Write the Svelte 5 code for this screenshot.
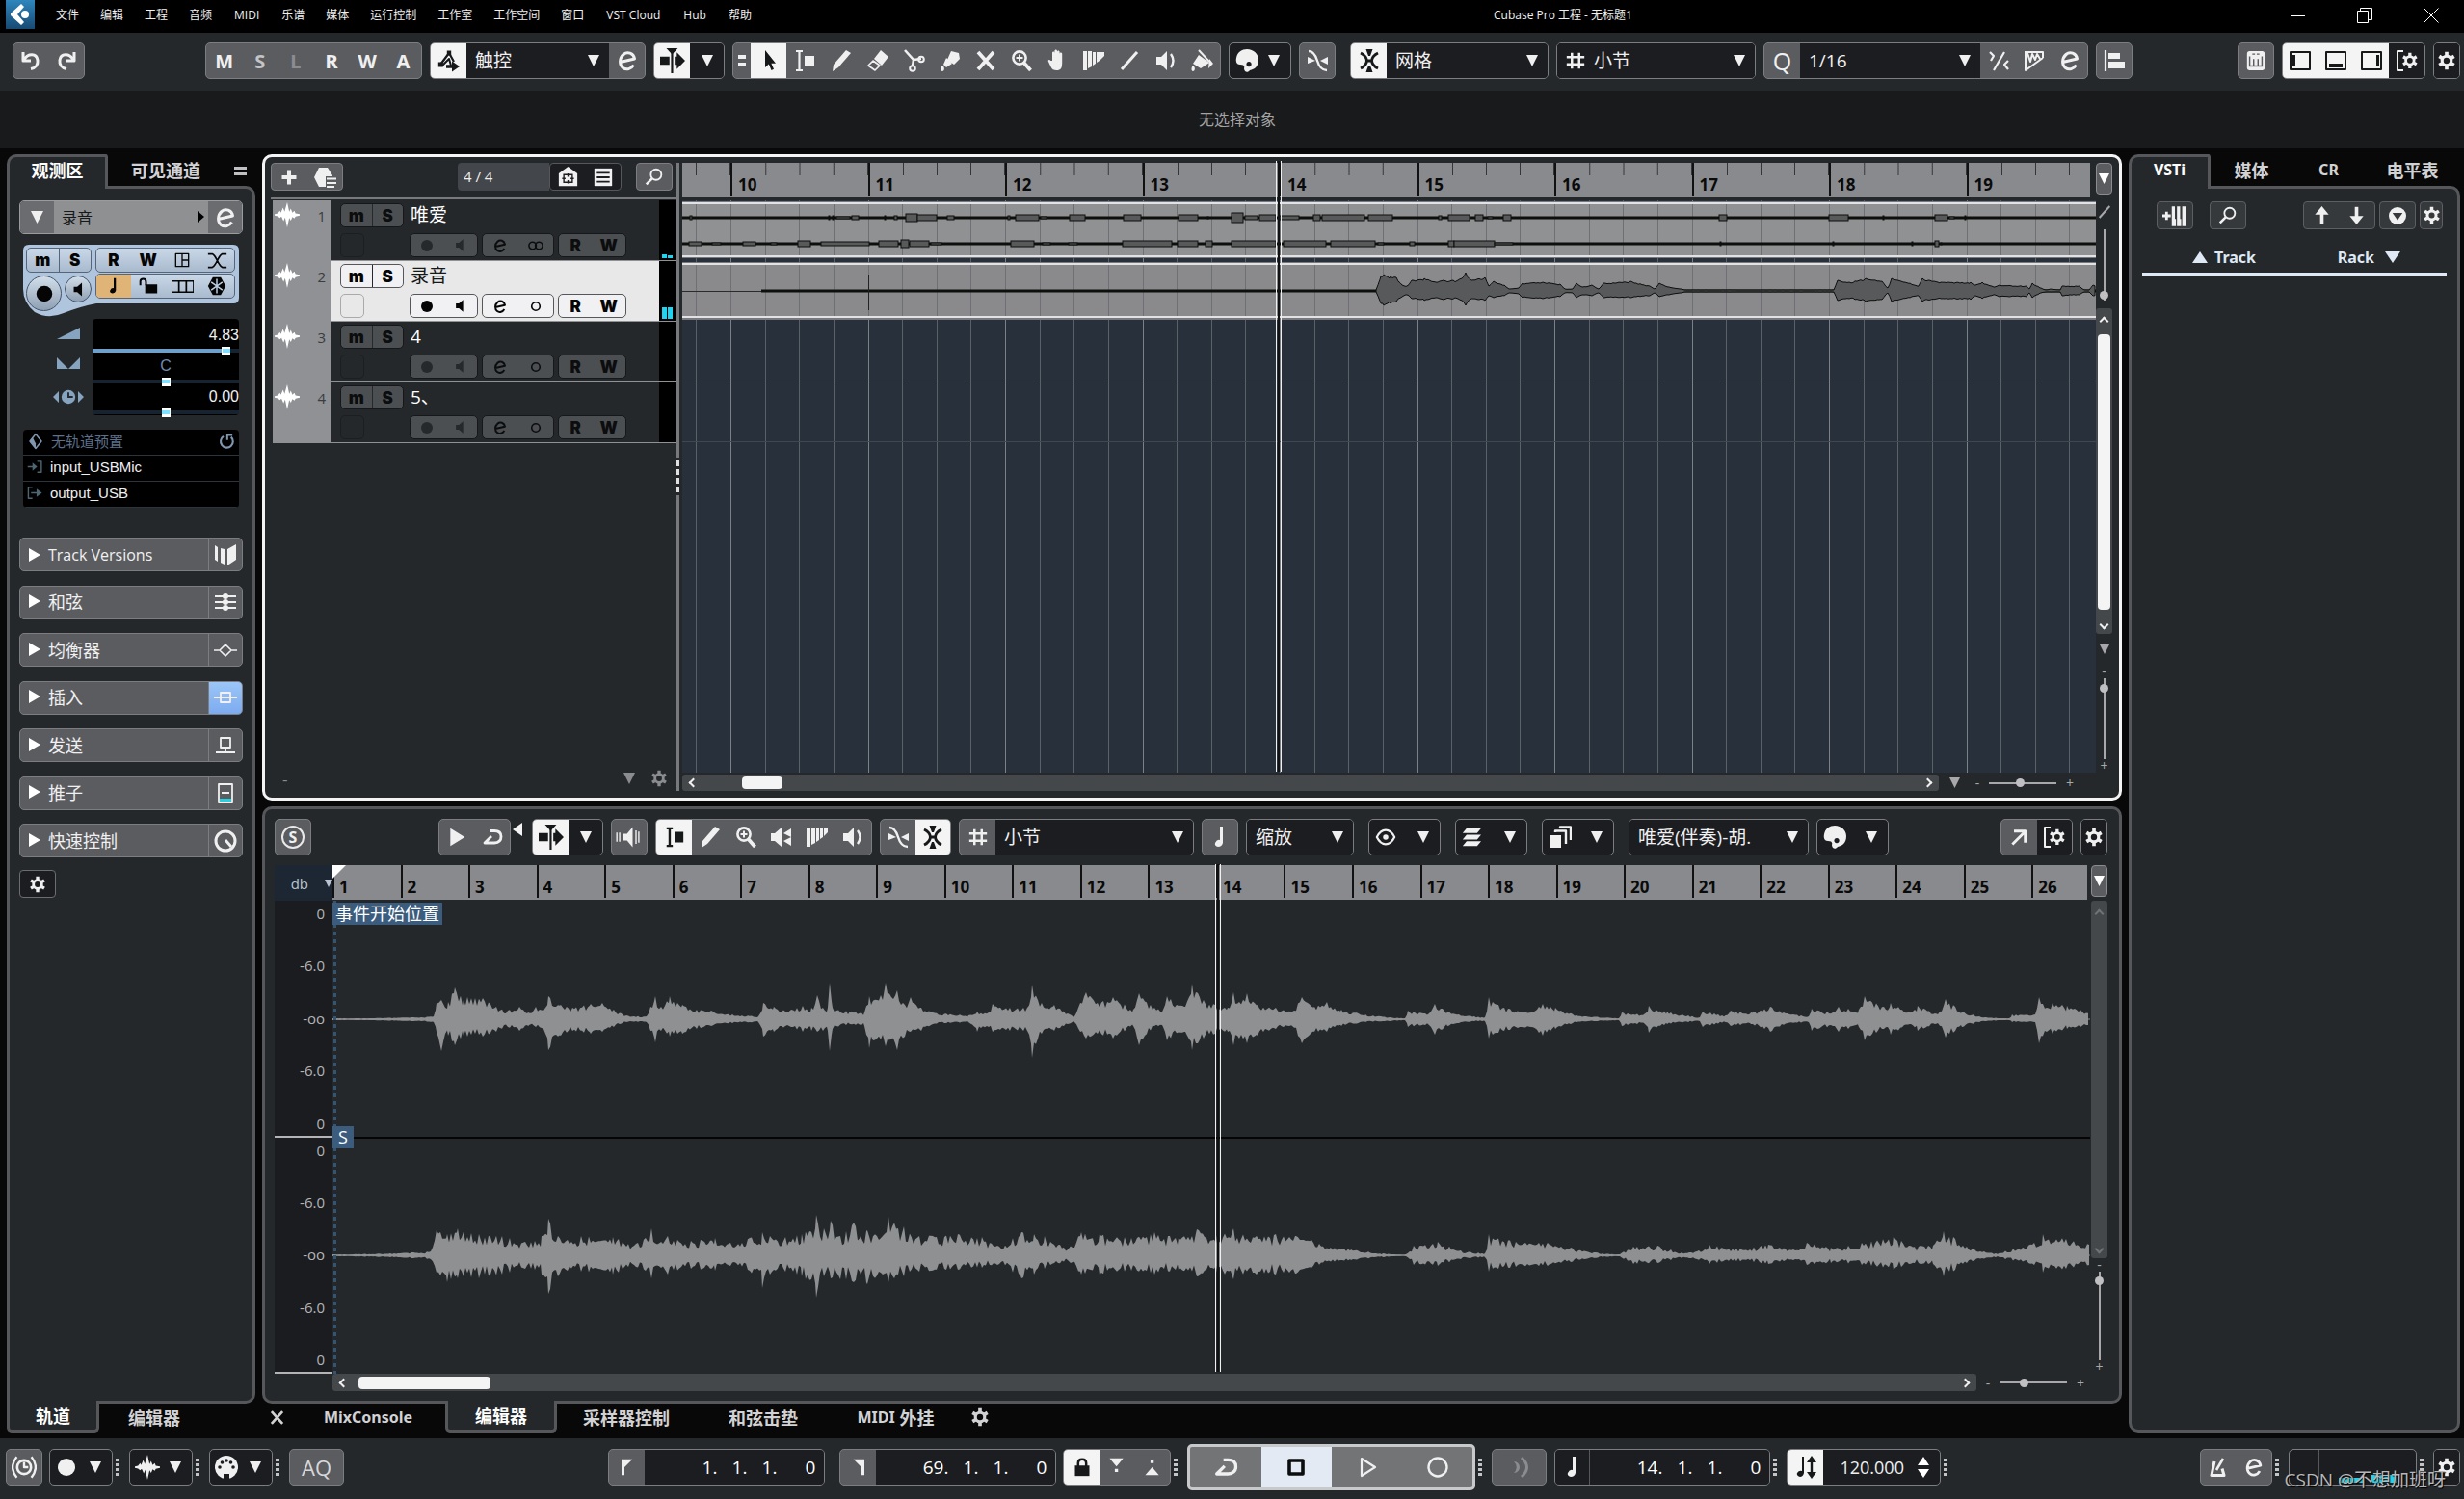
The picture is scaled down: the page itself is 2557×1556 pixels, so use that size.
<script>
  const line = (d, w = 2) =>
    `<path fill="none" stroke="currentColor" stroke-width="${w}" stroke-linejoin="round" d="${d}"/>`
  const solid = (d) => `<path fill="currentColor" d="${d}"/>`

  const cog =
    '<circle cx="12" cy="12" r="5.2" fill="none" stroke="currentColor" stroke-width="3.4"/>' +
    line('M12 2v4.500M12 17.500V22M3.600 7l3.600 2.200M16.800 14.800l3.600 2.200M20.400 7l-3.600 2.200M7.200 14.800L3.600 17', 4)

  const icons = {
    undo: line('M4 3v9h8', 3) + line('M5 11C9 4 18 4 19 11.500c.6 4.500-2 8-7 9', 3),
    redo: line('M20 3v9h-8', 3) + line('M19 11C15 4 6 4 5 11.500c-.6 4.500 2 8 7 9', 3),
    automation:
      line('M3 16L12 4l5 9', 2.2) +
      solid('M9.8 1.5h4.400v5h-4.400zM.8 13.500h5v5h-5z') +
      line('M5 17L12 10l2 7', 2) +
      line('M9 18h8', 3.4) +
      solid('M15 12.500l8 5.500-8 5.500z'),
    edit: line('M4.500 13.500L19.500 10C18.500 4 12 2 8 5.500c-4.500 4-4.500 11-.5 14 3.500 2.600 8.500 1.300 11-3', 3),
    autoscroll: solid('M0 8h9v8H0zM14 8h2V4l8 8-8 8v-4h-2zM6 0h11l-5.500 6z') + line('M11.500 3v21', 2),
    arrow: solid('M8 1v18l3.800-3.600L14.500 22l2.500-1.200-2.600-6H19z'),
    range: line('M3 2h7M6.500 2v20M3 22h7', 2.2) + solid('M12 7h10v10H12z'),
    rangeDark: line('M3 2h7M6.500 2v20M3 22h7', 2.6) + solid('M12 6h10v12H12z'),
    pencil: solid('M17 1l5 3L9 19l-6 4 1-7z'),
    eraser: line('M8 12l7 5-5 5-7-5z', 1.600) + solid('M9 10l7-9 8 7-7 9z'),
    scissors:
      line('M3 1l9 10 8-1M12 11l-1 7', 2.6) +
      '<circle cx="20" cy="10.500" r="2.800" fill="none" stroke="currentColor" stroke-width="2"/>' +
      '<circle cx="11" cy="20" r="2.800" fill="none" stroke="currentColor" stroke-width="2"/>',
    glue: solid('M14 2l8 2 1 6-6 6-7-5zM9 9l6 6-6 4-3-3zM5 17c3 2 2 6 0 6s-3-3 0-6z'),
    cross: line('M4 3l16 18M20 3L4 21', 3.8),
    zoom:
      '<circle cx="10" cy="9" r="6.600" fill="none" stroke="currentColor" stroke-width="2.600"/>' +
      line('M10 5.500v7M6.500 9h7', 2) +
      line('M14.500 14l7 8', 3.8),
    find:
      '<circle cx="14" cy="9" r="6" fill="none" stroke="currentColor" stroke-width="2"/>' +
      line('M9.500 13.500L3 20', 2.8),
    hand: solid('M7 12V4c0-2 2.400-2 2.400 0V2c0-2 2.600-2 2.600 0v1c0-2 2.600-2 2.600 0v2c0-2 2.600-2 2.600 0v9c0 6-1.500 8-5.600 8-3 0-5-1-6.200-4L3 13c-1-2 1-3 2.500-1z'),
    warp: solid('M1 2h4v20H1zM6 2h4v16l-4 2zM11 3h3v12l-3 2zM15 3h3v9l-3 2zM19 3h4v4l-4 4z'),
    slope: line('M4 21L20 3', 3),
    speaker: solid('M2 8h5l6-6v20l-6-6H2z') + line('M17 5q5 7 0 14', 2.4),
    bucket: solid('M9 6l11 8-9 6-8-5zM20 10l4 5-5 5zM3 17c3 2 2 6 0 6s-2-4 0-6z') + line('M9 1l11 12', 2),
    palette: solid('M12 0c7 0 12 5 12 11 0 7-4 10-9 11-2 3-6 2-6-2 1-3-1-4-4-4-3 0-5-2-4-7C2 3 7 0 12 0zm2 13a2.600 2.600 0 1 0 .1 0z'),
    curve: line('M3 2q6 0 9 10t10 10', 2.4) + solid('M2 8l8 4-8 3zM23 8l-8 4 8 4z'),
    snap: line('M3 4q6 3 6.500 8-.5 5-6.500 8M21 4q-6 3-6.500 8 .5 5 6.500 8M9 12h6', 2.8) + solid('M8.500 0h7L13 7h-2zM8.500 24h7L13 17h-2z'),
    hash: line('M7.500 2v20M16.500 2v20M1 7.500h22M1 16.500h22', 3),
    swing: line('M3 3l4 4-3 5M7 22L18 3M22 12l-4 4 4 5', 2.2),
    iterative: line('M3 2v20L21 9M3 3h18v6M5 4l3 9 2-8 3 6 2-6 3 5', 2),
    align: line('M3 1v22', 2.2) + solid('M6 4h12v6H6zM6 13h17v7H6z'),
    keys: solid('M5 1h14q3 0 3 3v16q0 3-3 3H5q-3 0-3-3V4q0-3 3-3z') + '<path stroke="#5b5c60" stroke-width="1.600" fill="none" d="M5 7v11h14V7M9.500 10v8M14.500 10v8M8 4.500h3M13 4.500h3"/>',
    paneLeft: line('M2 3h20v18H2z', 2) + solid('M4 6h3v12H4z'),
    paneBottom: line('M2 3h20v18H2z', 2) + solid('M5 15h14v4H5z'),
    paneRight: line('M2 3h20v18H2z', 2) + solid('M17 6h3v12h-3z'),
    layout: line('M8 2H2v20h6', 2) + `<g transform="translate(5 2) scale(.82)">${cog}</g>`,
    cog,
    plus: line('M12 2v20M2 12h20', 5.4),
    preset: solid('M6 2h9l5 8v1h-7v11H6L1 12z') + line('M14 13.500h10M14 18h10M14 22h8', 2.2),
    house: solid('M12 0l11 8v15H1V8z') + '<path stroke="#1b1d21" stroke-width="1.600" fill="none" d="M12 8v4M12 16v4M5 14h4M15 14h4M7 9.500h10v9H7z"/>',
    list: solid('M1 1h22v22H1z') + '<path stroke="#1b1d21" stroke-width="2.200" d="M4 6.500h16M4 12h16M4 17.500h16"/>',
    audio: solid('M0 11.300l3-.6L5 8l1 2 2-5 1.500 4L12 0l2 9 1.500-3 1.500 4 2-2 1 2.500 4 .8v1.400l-4 .8-1 2-2-1.500-1.500 3.500-1.500-2.500L12 24l-2-9.500L8.500 18l-2-4.500L5 15l-2-1.700-3-.6z'),
    dot: '<circle cx="12" cy="12" r="9" fill="currentColor"/>',
    monitor: solid('M5 8h5l7-6v20l-7-6H5z'),
    ring: '<circle cx="12" cy="12" r="6.400" fill="none" stroke="currentColor" stroke-width="2.400"/>',
    stereo:
      '<circle cx="7" cy="12" r="5.600" fill="none" stroke="currentColor" stroke-width="2.400"/>' +
      '<circle cx="17" cy="12" r="5.600" fill="none" stroke="currentColor" stroke-width="2.400"/>',
    grid: line('M2 2h20v20H2zM12 2v20M12 12h10', 2),
    fade: line('M1 4h5c6 3 6 13 12 16h5M1 20h5c6-3 6-13 12-16h5', 2),
    note: solid('M12 1h3v17q-1 4-5 4-4-1-3-4 2-4 5-3z'),
    unlock: line('M2 11V6q0-3 3.500-3T9 7v4', 2.400) + solid('M8 10h15v11H8z'),
    lanes: line('M0 6h24v12H0zM8 6v12M16 6v12', 1.800),
    freeze: solid('M7 1h10l6 11-6 11H7L1 12z') + '<path stroke="#b9cce1" stroke-width="1.800" d="M12 3v18M5 7l14 10M19 7L5 17"/>',
    volume: solid('M0 18L24 6v12z'),
    pan: solid('M0 6l12 12H0zM24 6L12 18h12z'),
    delay: solid('M0 12l4.500-4.500v9zM24 12l-4.500-4.500v9z') + '<circle cx="12" cy="12" r="5.400" fill="currentColor"/><path stroke="#24282b" stroke-width="1.400" fill="none" d="M12 8.500V12h3.500"/>',
    diamond: line('M12 2l8 10-8 10-8-10z', 2) + solid('M4 12l8 10V15L8 7z'),
    reset: line('M7 5.500a9 9 0 1 0 11 1', 3) + line('M12.500 11V3.500H20', 2.800),
    input: line('M1 12h8M15 4h6v16h-6', 2) + solid('M8 6l7 6-7 6z'),
    output: line('M8 4H2v16h6M6 12h9', 2) + solid('M14 6l8 6-8 6z'),
    versions: solid('M1 2l3 2v15l-3-2zM7 5l4 1v16l-4-2zM14 6l9-5v16l-9 6z'),
    chords: line('M1 6h22M1 12h22M1 18h22', 1.800) + '<circle cx="12" cy="6" r="3" fill="currentColor"/><circle cx="12" cy="12" r="3" fill="currentColor"/><circle cx="12" cy="18" r="3" fill="currentColor"/>',
    eq: line('M0 12h6M18 12h6M12 6l6 6-6 6-6-6z', 1.600),
    insert: line('M0 12h24M7 7h10v10H7z', 1.800),
    send: line('M7 4h10v10H7zM12 14v5M2 19h20', 1.800),
    fader: line('M5 3h14v19H5zM8 12h8', 1.800) + '<path fill="#26d0de" d="M6 18h12v3H6z"/>',
    quick: '<circle cx="12" cy="12" r="10" fill="none" stroke="currentColor" stroke-width="3"/>' + line('M12 11l6 7', 2.800),
    addRack: solid('M9 3h3v12h1v7H9zM14 3h3v12h1v7h-4zM19 3h4v19h-4z') + line('M4 8v8M0 12h8', 2.600),
    up: line('M12 23V8', 4.600) + solid('M12 0l9 11H3z'),
    down: line('M12 1v15', 4.600) + solid('M12 24l9-11H3z'),
    circleDown: '<circle cx="12" cy="12" r="12" fill="currentColor"/><path fill="#36393c" d="M5 8h14l-7 10z"/>',
    play: solid('M4 1l18 11L4 23z'),
    playLine: line('M6 3l14 9-14 9z', 2.200),
    cycle: line('M10 5.500h4q7 0 7 6t-7 6.500H4l7-7', 2.800),
    stop: line('M5 5h14v14H5z', 3.600),
    record: '<circle cx="12" cy="12" r="9.500" fill="none" stroke="currentColor" stroke-width="2.400"/>',
    audition: solid('M6 9h4l5-6v18l-5-6H6z') + line('M1 8v8M3.500 8v8M18 6v12M20.500 7v10', 1.200),
    mute: solid('M1 8h4l7-6v20l-7-6H1zM14 8l8-5v9zM14 16l8-4v9z'),
    eye: line('M2 12q4-8 10-8t10 8q-4 8-10 8T2 12z', 2.4) + '<circle cx="12" cy="12" r="3" fill="currentColor"/>',
    layers: solid('M6 1h18l-5 6H1zM6 9h18l-5 6H1zM6 17h18l-5 6H1z'),
    stack: solid('M1 10h12v13H1z') + line('M7 7V5.500h11V19M12 3V1.500h11V15', 2.4),
    popout: line('M4 21L19 6M6 4.500h14V19', 3.4),
    clock: '<circle cx="12" cy="12" r="6.600" fill="none" stroke="currentColor" stroke-width="2.400"/>' + line('M12 7v5h4M5 2q-8 10 0 20M19 2q8 10 0 20', 2.2),
    midi: '<circle cx="12" cy="12" r="12" fill="currentColor"/><g fill="#1b1d21"><circle cx="5" cy="12" r="1.800"/><circle cx="7.500" cy="7" r="1.800"/><circle cx="12" cy="5" r="1.800"/><circle cx="16.500" cy="7" r="1.800"/><circle cx="19" cy="12" r="1.800"/><path d="M9 19h6v5H9z"/></g>',
    flagLeft: solid('M4 1h15L8 12v11H4z'),
    flagRight: solid('M20 1H5l11 11v11h4z'),
    lock: line('M7 11V7q0-5 5-5t5 5v4', 3) + solid('M3 10h18v13H3z'),
    punchIn: solid('M3 1h17l-8.500 10zM9.500 14h4v4h-4z'),
    punchOut: solid('M3 22h17l-8.500-10zM9.500 3h4v4h-4z'),
    pulse: solid('M6 6a6 6 0 1 1 0 12 8 8 0 0 0 0-12z') + line('M14 2q11 10 0 20', 3),
    tempo: solid('M8 1h2v17q-1 4-4 4-4-1-3-4 2-3 5-2zM18 0l5 7H13zM18 24l5-7H13z') + line('M18 5v14', 2.4),
    metro: line('M8 6L5 20.500h13l-2-7', 3) + line('M10 15L17 3', 2.600)
  }

  const menus = ['文件', '编辑', '工程', '音频', 'MIDI', '乐谱', '媒体', '运行控制', '工作室', '工作空间', '窗口', 'VST Cloud', 'Hub', '帮助']
  const tools = ['range', 'pencil', 'eraser', 'scissors', 'glue', 'cross', 'zoom', 'hand', 'warp', 'slope', 'speaker', 'bucket']
  const editorTools = ['pencil', 'zoom', 'mute', 'warp', 'speaker']

  const isLatin = (text) => /^[A-Z]/.test(text)

  const sections = [
    { label: 'Track Versions', icon: 'versions' },
    { label: '和弦', icon: 'chords' },
    { label: '均衡器', icon: 'eq' },
    { label: '插入', icon: 'insert', active: true },
    { label: '发送', icon: 'send' },
    { label: '推子', icon: 'fader' },
    { label: '快速控制', icon: 'quick' }
  ]

  const tracks = [
    { name: '唯爱', channels: 'stereo', meter: [4, 3] },
    { name: '录音', channels: 'ring', meter: [12, 12], selected: true },
    { name: '4', channels: 'ring', meter: [] },
    { name: '5、', channels: 'ring', meter: [] }
  ]

  // the first bar is scrolled out, only its last beat shows
  const bars = ['', 10, 11, 12, 13, 14, 15, 16, 17, 18, 19]
  const editorBars = Array.from({ length: 26 }, (_, i) => i + 1)
  const dbLabels = ['0', '-6.0', '-oo', '-6.0', '0']

  // one vertical line for each beat of the arrange grid
  const beats = Array.from({ length: 42 }, (_, i) => ({
    x: Math.round(14.4 + i * 35.625),
    bar: i % 4 === 1
  }))

  // envelopes: x, height over the middle, depth under it
  const left = [
    [0, 1, 1], [26, 1, 1], [84, 2, 2], [105, 3, 3], [108, 17, 13], [113, 20, 33], [120, 18, 17], [127, 33, 27], [136, 20, 17], [140, 23, 18], [148, 22, 15], [156, 22, 18], [170, 13, 13], [182, 9, 8], [194, 13, 12], [203, 7, 7], [211, 13, 8], [219, 9, 10], [224, 24, 32], [237, 15, 17], [249, 12, 12], [268, 16, 15], [280, 17, 13], [292, 10, 8], [305, 4, 3], [326, 3, 3], [330, 13, 12], [335, 24, 24], [341, 13, 12], [350, 24, 18], [363, 15, 15], [378, 10, 10], [393, 9, 7], [415, 5, 4], [442, 3, 3], [447, 17, 18], [458, 13, 13], [476, 10, 8], [488, 14, 13], [497, 12, 12], [503, 25, 13], [509, 12, 12], [514, 12, 12], [516, 38, 33], [519, 12, 10], [537, 8, 5], [552, 7, 7], [557, 24, 30], [565, 20, 20], [574, 38, 28], [580, 23, 20], [586, 30, 32], [594, 15, 18], [600, 23, 13], [611, 12, 12], [623, 7, 5], [660, 4, 3], [669, 8, 13], [681, 7, 8], [685, 16, 13], [703, 12, 12], [721, 12, 12], [726, 36, 40], [736, 17, 15], [749, 15, 12], [770, 3, 3], [776, 17, 13], [782, 28, 20], [794, 17, 15], [810, 23, 20], [831, 10, 7], [837, 27, 27], [853, 12, 7], [862, 10, 8], [866, 24, 22], [885, 13, 13], [892, 37, 32], [904, 20, 20], [916, 15, 15], [929, 12, 13], [935, 28, 27], [941, 18, 20], [949, 27, 25], [960, 15, 17], [979, 12, 10], [996, 8, 7], [1006, 23, 25], [1019, 13, 13], [1032, 18, 13], [1047, 10, 7], [1072, 5, 3], [1097, 2, 2], [1113, 1, 1], [1116, 9, 8], [1138, 6, 6], [1144, 16, 16], [1157, 8, 7], [1185, 3, 2], [1196, 2, 2], [1200, 23, 20], [1216, 12, 12], [1244, 7, 8], [1256, 16, 17], [1269, 12, 10], [1291, 4, 3], [1335, 1, 1], [1338, 7, 7], [1361, 5, 4], [1366, 14, 14], [1385, 8, 5], [1419, 2, 2], [1422, 8, 8], [1447, 4, 3], [1451, 9, 7], [1472, 7, 5], [1492, 13, 13], [1510, 6, 4], [1532, 3, 3], [1535, 11, 12], [1557, 7, 7], [1563, 13, 13], [1584, 10, 8], [1590, 24, 22], [1610, 13, 10], [1617, 17, 16], [1638, 7, 5], [1645, 14, 12], [1666, 5, 4], [1674, 21, 19], [1691, 8, 8], [1716, 2, 2], [1740, 1, 1], [1743, 5, 3], [1767, 5, 3], [1771, 23, 25], [1779, 12, 13], [1785, 17, 15], [1800, 14, 10], [1824, 7, 7]
  ]
  const right = [
    [0, 1, 1], [60, 2, 2], [102, 4, 4], [108, 26, 18], [119, 22, 28], [130, 28, 24], [152, 22, 24], [176, 20, 20], [200, 14, 14], [217, 20, 20], [224, 38, 40], [234, 20, 22], [258, 20, 17], [291, 19, 20], [315, 12, 12], [331, 28, 24], [348, 20, 20], [372, 15, 14], [397, 18, 16], [413, 13, 11], [433, 18, 16], [446, 24, 34], [454, 20, 20], [470, 19, 17], [487, 22, 22], [502, 42, 44], [510, 28, 22], [517, 36, 24], [527, 20, 25], [541, 34, 28], [548, 20, 20], [555, 26, 30], [571, 20, 20], [577, 40, 28], [593, 30, 22], [609, 20, 17], [649, 22, 15], [674, 19, 13], [690, 10, 10], [715, 24, 24], [728, 22, 20], [739, 20, 14], [764, 7, 6], [777, 24, 20], [796, 22, 20], [829, 18, 16], [853, 24, 20], [878, 18, 15], [897, 27, 22], [918, 21, 18], [935, 28, 25], [959, 20, 20], [979, 22, 20], [1000, 20, 19], [1016, 16, 13], [1057, 6, 5], [1090, 2, 2], [1114, 1, 1], [1122, 10, 10], [1147, 14, 11], [1171, 5, 4], [1196, 2, 2], [1200, 22, 17], [1228, 14, 12], [1261, 13, 11], [1285, 8, 7], [1318, 2, 2], [1334, 1, 1], [1350, 9, 9], [1375, 10, 8], [1400, 3, 3], [1416, 4, 4], [1429, 11, 9], [1457, 7, 6], [1490, 11, 9], [1522, 5, 4], [1530, 13, 10], [1555, 8, 8], [1587, 13, 10], [1620, 20, 15], [1636, 10, 9], [1661, 10, 9], [1672, 25, 22], [1702, 7, 6], [1726, 2, 2], [1766, 13, 10], [1775, 22, 18], [1799, 17, 14], [1824, 11, 10]
  ]
  const voice = [
    [720, 1, 1], [725, 15, 13], [728, 17, 15], [735, 15, 13], [741, 14, 11], [747, 6, 6], [752, 5, 4], [757, 11, 8], [770, 13, 10], [782, 9, 7], [790, 11, 9], [805, 11, 8], [813, 19, 15], [819, 11, 8], [833, 14, 10], [837, 5, 5], [842, 10, 7], [853, 6, 5], [858, 2, 2], [868, 3, 3], [872, 8, 7], [893, 9, 8], [911, 7, 6], [916, 2, 2], [924, 2, 2], [928, 8, 7], [934, 4, 4], [944, 6, 5], [951, 2, 2], [956, 8, 7], [984, 10, 7], [1004, 5, 5], [1009, 2, 2], [1014, 8, 6], [1024, 4, 4], [1037, 2, 2], [1040, 1, 1], [1195, 1, 1], [1199, 11, 10], [1211, 9, 8], [1228, 13, 11], [1245, 10, 9], [1251, 3, 2], [1255, 13, 11], [1274, 8, 7], [1283, 5, 5], [1287, 13, 11], [1306, 9, 8], [1337, 9, 9], [1342, 6, 5], [1349, 9, 8], [1362, 4, 4], [1367, 6, 6], [1395, 5, 6], [1398, 2, 2], [1401, 8, 7], [1410, 3, 2], [1415, 1, 1], [1420, 2, 1], [1430, 1, 1], [1432, 5, 5], [1450, 5, 4], [1455, 1, 1], [1460, 1, 1], [1464, 6, 5], [1467, 5, 5]
  ]

  const noise = (x) => {
    const n = Math.sin(x * 12.9898) * 43758.5453
    return n - Math.floor(n)
  }

  const wave = (points, mid, rough) => {
    const top = []
    const bottom = []
    for (let i = 1; i < points.length; i++) {
      const [x1, u1, d1] = points[i - 1]
      const [x2, u2, d2] = points[i]
      for (let x = x1; x < x2; x += 2) {
        const t = (x - x1) / (x2 - x1)
        const fade = t ? 1 - rough * noise(x) : 1
        top.push(`${x} ${(mid - (u1 + (u2 - u1) * t) * fade).toFixed(1)}`)
        bottom.unshift(`${x} ${(mid + (d1 + (d2 - d1) * t) * fade).toFixed(1)}`)
      }
    }
    return `M${top.join('L')}L${bottom.join('L')}Z`
  }

  // loud spots in the backing track: start, end, half height
  const loudLeft = [[8, 10, 2], [152, 153, 2], [156, 157, 2], [160, 174, 1], [176, 183, 2], [210, 211, 2], [220, 223, 2], [232, 244, 4], [244, 264, 3], [275, 282, 2], [338, 340, 2], [346, 370, 3], [372, 378, 1], [402, 418, 3], [458, 476, 3], [515, 535, 3], [545, 546, 1], [570, 582, 5], [584, 597, 2], [599, 616, 3], [620, 640, 2], [655, 662, 3], [664, 708, 3], [712, 737, 3], [785, 788, 2], [795, 817, 3], [823, 831, 3], [836, 841, 1], [852, 860, 3], [1076, 1084, 3], [1190, 1210, 3], [1246, 1247, 2], [1300, 1313, 3], [1315, 1320, 1], [1331, 1332, 2]]
  const loudRight = [[7, 20, 2], [31, 40, 1], [63, 76, 2], [92, 98, 1], [120, 133, 3], [144, 194, 2], [204, 224, 3], [227, 235, 4], [236, 256, 3], [258, 269, 1], [341, 365, 3], [374, 382, 1], [401, 410, 1], [457, 508, 3], [514, 535, 3], [543, 550, 3], [570, 616, 3], [624, 668, 3], [673, 719, 3], [722, 728, 1], [755, 760, 2], [795, 801, 3], [801, 843, 3], [843, 862, 1], [1077, 1078, 2], [1194, 1195, 2], [1276, 1277, 2], [1300, 1304, 3], [1306, 1307, 1]]
</script>

{#snippet icon(name, size = 24)}
  <svg class="icon" viewBox="0 0 24 24" width={size} height={size} aria-hidden="true">{@html icons[name]}</svg>
{/snippet}

{#snippet btn(name, mod = '', size = 24)}
  <button class="btn {mod}" aria-label={name}>{@render icon(name, size)}</button>
{/snippet}

{#snippet caret(size = 12)}
  <svg class="caret" viewBox="0 0 12 12" width={size} height={size} aria-hidden="true"><path d="M0 0h12L6 12z" /></svg>
{/snippet}

{#snippet select(label, value)}
  <label class="select">
    <select aria-label={label}><option>{value}</option></select>
    {@render caret()}
  </label>
{/snippet}

{#snippet drop(name, size = 24)}
  <button class="group group--dark drop" aria-label={name}>{@render icon(name, size)}{@render caret()}</button>
{/snippet}

{#snippet dots()}
  <span class="dots"><i></i><i></i><i></i><i></i></span>
{/snippet}

<div class="app">
  <header class="titlebar">
    <svg class="titlebar__logo" viewBox="0 0 30 30" width="30" height="30" aria-hidden="true">
      <defs><linearGradient id="logo" x2="0" y2="1"><stop stop-color="#2f86bd" /><stop offset="1" stop-color="#174a73" /></linearGradient></defs>
      <rect width="30" height="30" fill="url(#logo)" />
      <path fill="#fff" d="M16 4l3 3-7 8 7 8-3 3L5 16v-2z" />
      <circle cx="20" cy="15" r="4" fill="#fff" />
    </svg>
    <nav class="menu">
      {#each menus as item}
        <button class="menu__item" class:menu__item--latin={isLatin(item)}>{item}</button>
      {/each}
    </nav>
    <span class="titlebar__title">Cubase Pro 工程 - 无标题1</span>
    <div class="windowButtons">
      <button aria-label="Minimize"><svg viewBox="0 0 16 16" width="16" height="16"><path d="M0 8.500h15" /></svg></button>
      <button aria-label="Restore"><svg viewBox="0 0 16 16" width="16" height="16"><path d="M.5 3.500h11v12H.5zM3.500 3.500v-3h12v12h-4" /></svg></button>
      <button aria-label="Close"><svg viewBox="0 0 16 16" width="16" height="16"><path d="M.5.5l15 15M15.500.5l-15 15" /></svg></button>
    </div>
  </header>

  <div class="toolbar">
    <div class="group w75">{@render btn('undo')}{@render btn('redo')}</div>
    <div class="group states">
      {#each ['M', 'S', 'L', 'R', 'W', 'A'] as state}
        <button class="btn btn--letter" class:btn--off={state === 'L'} class:btn--dim={state === 'S'}>{state}</button>
      {/each}
    </div>
    <div class="group w224">{@render btn('automation', 'btn--on')}{@render select('自动化模式', '触控')}{@render btn('edit')}</div>
    <div class="group w74">{@render btn('autoscroll', 'btn--on btn--fixed', 26)}<button class="btn btn--dark" aria-label="滚动">{@render caret()}</button></div>
    <div class="group tools">
      <button class="tools__grip" aria-label="工具"><i></i><i></i></button>
      {@render btn('arrow', 'btn--on')}
      {#each tools as tool}{@render btn(tool)}{/each}
    </div>
    <div class="w65">{@render drop('palette')}</div>
    <div class="group w38">{@render btn('curve')}</div>
    <div class="group w206 space">{@render btn('snap', 'btn--on')}{@render select('吸附类型', '网格')}</div>
    <div class="group group--dark w207 gridType">{@render btn('hash', 'btn--dark', 20)}{@render select('网格类型', '小节')}</div>
    <div class="group quantize"><button class="btn btn--q">Q</button>{@render select('量化', '1/16')}{@render btn('swing')}{@render btn('iterative')}{@render btn('edit')}</div>
    <div class="group w38">{@render btn('align')}</div>
    <div class="group w38 push">{@render btn('keys', '', 22)}</div>
    <div class="group w149">
      {@render btn('paneLeft', 'btn--on', 24)}{@render btn('paneBottom', 'btn--on', 24)}{@render btn('paneRight', 'btn--on', 24)}{@render btn('layout', 'btn--dark')}
    </div>
    <div class="group w28">{@render btn('cog', 'btn--dark', 22)}</div>
  </div>

  <div class="infoline">无选择对象</div>

  <main class="workspace">
    <aside class="side">
      <div class="tabs">
        <button class="tab tab--active w105">观测区</button>
        <button class="tab w120">可见通道</button>
        <button class="tab tab--menu" aria-label="菜单"><i></i><i></i></button>
      </div>
      <div class="side__body">
        <div class="selector">
          <button class="selector__end" aria-label="打开">{@render caret(13)}</button>
          <button class="selector__name">录音<svg viewBox="0 0 7 12" width="7" height="12"><path d="M0 0l7 6-7 6z" /></svg></button>
          <button class="selector__end" aria-label="编辑">{@render icon('edit', 24)}</button>
        </div>

        <div class="channel">
          <svg class="channel__shape" viewBox="0 0 224 76" aria-hidden="true"><path d="M6 0h212q6 0 6 6v49q0 6-6 6H76Q60 64 42 71 26 78 12 70 0 60 0 46V6Q0 0 6 0z" /></svg>
          <div class="channel__left">
            <div class="pad"><button class="ms">m</button><button class="ms">S</button></div>
            <div class="channel__round">
              <button class="round round--big" aria-label="录音启用">{@render icon('dot', 22)}</button>
              <button class="round" aria-label="监听">{@render icon('monitor', 17)}</button>
            </div>
          </div>
          <div class="channel__right">
            <div class="pad"><button class="ms">R</button><button class="ms">W</button><button aria-label="grid">{@render icon('grid', 16)}</button><button aria-label="fade">{@render icon('fade', 21)}</button></div>
            <div class="pad"><button class="pad__amber" aria-label="note">{@render icon('note', 18)}</button><button aria-label="lock">{@render icon('unlock', 20)}</button><button aria-label="lanes">{@render icon('lanes', 23)}</button><button aria-label="freeze">{@render icon('freeze', 20)}</button></div>
          </div>
        </div>

        <div class="levels">
          <div class="levels__icons">{@render icon('volume')}{@render icon('pan')}{@render icon('delay', 32)}</div>
          <div class="levels__values">
            <label><span>4.83</span><input type="range" aria-label="音量" value="94" style="--fill: 93%" /></label>
            <label class="levels__pan"><span>C</span><input type="range" aria-label="声像" value="50" style="--fill: 0%" /></label>
            <label><span>0.00</span><input type="range" aria-label="延迟" value="50" style="--fill: 0%" /></label>
          </div>
        </div>

        <div class="routing">
          <button class="routing__row routing__row--empty">{@render icon('diamond', 18)}<span>无轨道预置</span>{@render icon('reset', 17)}</button>
          <button class="routing__row">{@render icon('input', 17)}<span>input_USBMic</span></button>
          <button class="routing__row">{@render icon('output', 17)}<span>output_USB</span></button>
        </div>

        <div class="sections">
          {#each sections as section}
            <div class="section">
              <button class="section__name" class:section__name--latin={isLatin(section.label)}><svg viewBox="0 0 12 14" width="12" height="14"><path d="M0 0l12 7-12 7z" /></svg>{section.label}</button>
              <button class="section__icon" class:section__icon--active={section.active} aria-label={section.label}>{@render icon(section.icon)}</button>
            </div>
          {/each}
        </div>
        <button class="setup" aria-label="设置">{@render icon('cog', 20)}</button>
      </div>
      <div class="tabs tabs--bottom">
        <button class="tab tab--active w96">轨道</button>
        <button class="tab w114">编辑器</button>
      </div>
    </aside>

    <div class="center">
      <section class="project">
        <div class="trackList">
          <div class="trackList__head">
            <div class="mini w75">{@render btn('plus', '', 18)}{@render btn('preset', '')}</div>
            <span class="signature">4 / 4</span>
            <div class="mini mini--dark w75">{@render btn('house', '', 21)}{@render btn('list', '', 20)}</div>
            <div class="mini w38 trackList__find">{@render btn('find', '', 22)}</div>
          </div>
          <div class="trackList__rows">
            {#each tracks as track, i}
              <div class="track" class:track--selected={track.selected}>
                <div class="track__tab">{@render icon('audio', 26)}<span>{i + 1}</span></div>
                <div class="track__main">
                  <div class="track__row">
                    <div class="cell w66"><button class="ms">m</button><button class="ms">S</button></div>
                    <span class="track__name">{track.name}</span>
                  </div>
                  <div class="track__row">
                    <button class="cell track__color" aria-label="颜色"></button>
                    <div class="cell w71 cell--faint"><button aria-label="录音">{@render icon('dot', 16)}</button><button aria-label="监听">{@render icon('monitor', 15)}</button></div>
                    <div class="cell w75"><button aria-label="编辑">{@render icon('edit', 16)}</button><button aria-label="声道">{@render icon(track.channels, 16)}</button></div>
                    <div class="cell w71"><button class="ms">R</button><button class="ms">W</button></div>
                  </div>
                </div>
                <div class="track__meter">
                  {#each track.meter as level}<i style="height: {level}px"></i>{/each}
                </div>
              </div>
            {/each}
          </div>
          <div class="trackList__foot"><span>-</span><button aria-label="缩放">{@render caret()}</button><button aria-label="设置">{@render icon('cog', 20)}</button></div>
        </div>
        <div class="divider"><i></i></div>

        <div class="arrange">
          <div class="ruler ruler--beats">
            {#each bars as bar, i}
              <span class="ruler__bar" style="width: {14250 / 1461}%; margin-left: {i ? 0 : -9250 / 1461}%">{bar}</span>
            {/each}
          </div>
          <div class="arrange__canvas">
            <svg viewBox="0 0 1467 594" preserveAspectRatio="none" aria-hidden="true">
              <rect width="1467" height="594" fill="#28303b" />
              {#each beats as beat}
                <path d="M{beat.x}.5 0V594" stroke={beat.bar ? '#7c8084' : '#5a6066'} />
              {/each}
              <path d="M0 187.500H1467M0 250.500H1467" stroke="#3f4751" />
              <rect y="1" width="1467" height="59" fill="#77797c" />
              <rect y="2" width="1467" height="57" fill="#e2e2e4" />
              <rect y="4" width="1467" height="53" fill="#8f9193" />
              <rect y="64" width="1467" height="60" fill="#77797c" />
              <rect y="65" width="1467" height="57" fill="#e2e2e4" />
              <rect y="67" width="1467" height="53" fill="#8a8a8c" />
              {#each beats as beat}
                <path d="M{beat.x}.5 4V57M{beat.x}.5 67V120" stroke="#6f7073" />
              {/each}
              <path d="M0 18H1467M0 45H1467" stroke="#0d0f0d" stroke-width="3" />
              {#each loudLeft as [from, to, h]}
                <rect x={from} y={18 - h} width={to - from} height={h * 2} class="loud" />
              {/each}
              {#each loudRight as [from, to, h]}
                <rect x={from} y={45 - h} width={to - from} height={h * 2} class="loud" />
              {/each}
              <path d="M0 94.500H82" stroke="#2a2b2c" />
              <path d="M82 94H1467" stroke="#0d0f0d" stroke-width="3" />
              <path d={wave(voice, 94, 0.15)} class="loud" />
              <path d="M193.500 77V114" stroke="#222" />
            </svg>
          </div>
          <div class="scrollRow">
            <div class="scroll"><b class="chev chev--left"></b><i class="scroll__thumb scroll__thumb--project"></i><b class="chev chev--right"></b></div>
            <button class="scrollRow__menu" aria-label="缩放预置">{@render caret(11)}</button>
            <span>-</span><input type="range" class="zoom" aria-label="水平缩放" value="46" /><span>+</span>
          </div>
          <i class="cursor cursor--project"></i>
        </div>

        <div class="zoomColumn">
          <button class="zoomColumn__menu" aria-label="标尺">{@render caret(11)}</button>
          {@render icon('slope', 16)}
          <input type="range" class="zoom zoom--vertical zoomColumn__wave" aria-label="波形缩放" value="98" />
          <div class="vscroll"><b class="chev chev--up"></b><i></i><b class="chev chev--down"></b></div>
          <button class="zoomColumn__preset" aria-label="缩放预置">{@render caret(10)}</button>
          <span>-</span>
          <input type="range" class="zoom zoom--vertical zoomColumn__height" aria-label="垂直缩放" value="8" />
          <span>+</span>
        </div>
      </section>

      <section class="editor">
        <div class="editor__body">
          <div class="editorTools">
            <div class="group w38"><button class="btn" aria-label="独奏"><span class="solo">S</span></button></div>
            <div class="group w75 editorTools__play">{@render btn('play', '', 20)}{@render btn('cycle', '', 24)}</div>
            <svg class="editorTools__more" viewBox="0 0 10 14" width="10" height="14"><path d="M10 0v14L0 7z" /></svg>
            <div class="group w74">{@render btn('autoscroll', 'btn--on btn--fixed', 26)}<button class="btn btn--dark" aria-label="滚动">{@render caret()}</button></div>
            <div class="group w38">{@render btn('audition', '', 28)}</div>
            <div class="group w225">{@render btn('rangeDark', 'btn--on', 22)}{#each editorTools as tool}{@render btn(tool)}{/each}</div>
            <div class="group w74">{@render btn('curve')}{@render btn('snap', 'btn--on')}</div>
            <div class="group w244">{@render btn('hash', '', 20)}{@render select('网格类型', '小节')}</div>
            <div class="group w38">{@render btn('note')}</div>
            <div class="group w112">{@render select('缩放', '缩放')}</div>
            <div class="w75 space">{@render drop('eye', 22)}</div>
            <div class="w75 space">{@render drop('layers', 20)}</div>
            <div class="w75 space">{@render drop('stack')}</div>
            <div class="group w187 space">{@render select('事件', '唯爱(伴奏)-胡.')}</div>
            <div class="w75">{@render drop('palette')}</div>
            <div class="group w75 push">{@render btn('popout', '', 20)}{@render btn('layout', 'btn--dark')}</div>
            <div class="group w28">{@render btn('cog', 'btn--dark', 22)}</div>
          </div>

          <div class="sample">
            <button class="sample__unit">db {@render caret(8)}</button>
            <div class="ruler sample__ruler">
              {#each editorBars as bar}
                <span class="ruler__bar" style="width: {7054 / 1821}%">{bar}</span>
              {/each}
              <svg class="sample__flag" viewBox="0 0 14 14" width="14" height="14"><path d="M0 0h14L0 14z" /></svg>
            </div>
            <button class="zoomColumn__menu" aria-label="标尺">{@render caret(11)}</button>

            <div class="sample__scale">
              {#each [0, 1] as channel}
                <div class="sample__half">{#each dbLabels as label}<span>{label}</span>{/each}</div>
              {/each}
            </div>
            <div class="sample__canvas">
              <svg viewBox="0 0 1824 491" preserveAspectRatio="none" aria-hidden="true">
                <path d={wave(left, 123, 0.4)} fill="#8f9092" />
                <path d={wave(right, 368, 0.55)} fill="#8f9092" />
                <path d="M0 123H1824M0 368H1824" stroke="#8f9092" />
                <path d="M0 246H1824" stroke="#050505" stroke-width="2" />
                <path d="M2.500 0V491" stroke="#345473" stroke-width="3" stroke-dasharray="4 4" />
              </svg>
              <span class="flag">事件开始位置</span>
              <span class="flag flag--snap">S</span>
            </div>
            <div class="sample__side">
              <div class="vscroll vscroll--idle"><b class="chev chev--up"></b><b class="chev chev--down"></b></div>
              <span>-</span>
              <input type="range" class="zoom zoom--vertical" aria-label="垂直缩放" value="6" />
              <span>+</span>
            </div>
            <div class="scrollRow sample__scroll">
              <div class="scroll"><b class="chev chev--left"></b><i class="scroll__thumb scroll__thumb--sample"></i><b class="chev chev--right"></b></div>
              <span>-</span><input type="range" class="zoom" aria-label="水平缩放" value="34" /><span>+</span>
            </div>
            <i class="cursor cursor--sample"></i>
          </div>
        </div>
        <div class="tabs tabs--bottom">
          <button class="tab tab--close" aria-label="关闭">{@render icon('cross', 17)}</button>
          <button class="tab tab--latin w160">MixConsole</button>
          <button class="tab tab--active w116">编辑器</button>
          <button class="tab w144">采样器控制</button>
          <button class="tab w140">和弦击垫</button>
          <button class="tab w135"><span class="tab--latin">MIDI</span>&nbsp;外挂</button>
          <button class="tab w40" aria-label="设置">{@render icon('cog', 22)}</button>
        </div>
      </section>
    </div>

    <aside class="rack">
      <div class="tabs">
        <button class="tab tab--active tab--latin w85">VSTi</button>
        <button class="tab w85">媒体</button>
        <button class="tab tab--latin w75">CR</button>
        <button class="tab w99">电平表</button>
      </div>
      <div class="rack__body">
        <div class="rack__tools">
          <div class="mini mini--soft w38">{@render btn('addRack', '', 26)}</div>
          <div class="mini mini--soft w38">{@render btn('find', '', 22)}</div>
          <div class="mini mini--soft w75 push">{@render btn('up', '', 19)}{@render btn('down', '', 19)}</div>
          <div class="mini mini--soft w38">{@render btn('circleDown', '', 18)}</div>
          <div class="mini mini--soft w24">{@render btn('cog', '', 21)}</div>
        </div>
        <div class="rack__heads">
          <button><svg viewBox="0 0 16 12" width="16" height="12"><path d="M8 0l8 12H0z" /></svg>Track</button>
          <button>Rack<svg viewBox="0 0 16 12" width="16" height="12"><path d="M0 0h16L8 12z" /></svg></button>
        </div>
      </div>
    </aside>
  </main>

  <footer class="transport">
    <div class="group w38">{@render btn('clock', '', 26)}</div>
    <div class="w66 gap7">{@render drop('dot')}</div>
    {@render dots()}
    <div class="w66">{@render drop('audio', 26)}</div>
    {@render dots()}
    <div class="w66">{@render drop('midi')}</div>
    {@render dots()}
    <div class="group w58"><button class="btn btn--aq">AQ</button></div>
    <span class="transport__gapLeft"></span>
    <div class="group w225">{@render btn('flagLeft', '', 18)}<span class="time"><b>1.</b><b>1.</b><b>1.</b><b>0</b></span></div>
    <div class="group w225 gap15">{@render btn('flagRight', '', 18)}<span class="time"><b>69.</b><b>1.</b><b>1.</b><b>0</b></span></div>
    <div class="group w112 gap7">{@render btn('lock', 'btn--on', 20)}{@render btn('punchIn', '', 20)}{@render btn('punchOut', '', 20)}</div>
    {@render dots()}
    <div class="deck">{@render btn('cycle', '', 28)}{@render btn('stop', 'btn--stop')}{@render btn('playLine')}{@render btn('record')}</div>
    {@render dots()}
    <div class="group w58">{@render btn('pulse', 'btn--off')}</div>
    <div class="group w224 gap8">{@render btn('note', 'btn--dark btn--split')}<span class="time"><b>14.</b><b>1.</b><b>1.</b><b>0</b></span></div>
    {@render dots()}
    <div class="group group--dark w160">
      {@render btn('tempo', 'btn--on')}
      <input class="tempo" aria-label="速度" value="120.000" />
      <svg class="spin" viewBox="0 0 12 24" width="12" height="24"><path d="M6 1l6 9H0zM6 23l6-9H0z" /></svg>
    </div>
    {@render dots()}
    <span class="transport__gapRight"></span>
    <div class="group w75">{@render btn('metro')}{@render btn('edit', '', 22)}</div>
    {@render dots()}
    <div class="group group--dark output"><span></span><div><i></i><i></i></div></div>
    {@render dots()}
    <div class="group w28">{@render btn('cog', 'btn--dark', 22)}</div>
    <span class="watermark">CSDN @不想加班呀</span>
  </footer>
</div>

<style>
  :global(body) {
    margin: 0;
    background: #080808;
  }

  .app {
    display: flex;
    flex-direction: column;
    min-height: 100vh;
    color: #f0f0f0;
    font: 17px 'Open Sans', 'Noto Sans CJK SC', sans-serif;
  }

  .app :global(*) {
    box-sizing: border-box;
  }

  button,
  select,
  input {
    margin: 0;
    padding: 0;
    border: 0;
    background: none;
    color: inherit;
    font: inherit;
  }

  button {
    display: flex;
    align-items: center;
    justify-content: center;
    white-space: nowrap;
  }

  .icon,
  .caret {
    flex: none;
    display: block;
  }

  .caret {
    fill: currentColor;
  }

  .w24 { width: 24px; }
  .w28 { width: 28px; }
  .w38 { width: 38px; }
  .w40 { width: 40px; }
  .w58 { width: 57px; }
  .w65 { width: 65px; }
  .w66 { width: 66px; }
  .w71 { width: 71px; }
  .w74 { width: 74px; }
  .w75 { width: 75px; }
  .w85 { width: 85px; }
  .w96 { width: 96px; }
  .w99 { width: 99px; }
  .w105 { width: 105px; }
  .w112 { width: 112px; }
  .w114 { width: 114px; }
  .w116 { width: 116px; }
  .w120 { width: 120px; }
  .w135 { width: 135px; }
  .w140 { width: 140px; }
  .w144 { width: 144px; }
  .w149 { width: 149px; }
  .w160 { width: 160px; }
  .w187 { width: 187px; }
  .w206 { width: 206px; }
  .w207 { width: 207px; }
  .w224 { width: 224px; }
  .w225 { width: 225px; }
  .w244 { width: 244px; }

  .space,
  .gap7 { margin-left: 7px; }
  .gap8 { margin-left: 8px; }
  .gap15 { margin-left: 15px; }
  .push { margin-left: auto; }

  /* title bar */
  .titlebar {
    display: flex;
    height: 34px;
    background: #000;
    font-size: 12px;
    line-height: 32px;
  }

  .titlebar__logo {
    margin: 0 11px 0 6px;
  }

  .menu {
    display: flex;
    margin-right: auto;
  }

  .menu__item {
    padding: 0 11px;
    height: 32px;
  }

  .menu__item--latin {
    padding: 0 12px;
  }

  .titlebar__title {
    flex: none;
    width: 800px;
  }

  .windowButtons {
    display: flex;
  }

  .windowButtons button {
    width: 69px;
    height: 32px;
  }

  .windowButtons svg {
    fill: none;
    stroke: #fff;
  }

  /* button groups */
  .toolbar {
    display: flex;
    gap: 8px;
    height: 60px;
    padding: 10px 4px 0 13px;
    background: #24282b;
  }

  .group {
    display: flex;
    flex: none;
    height: 38px;
    overflow: hidden;
    border: 1px solid #7b7d80;
    border-radius: 5px;
    background: #5b5c60;
  }

  .group--dark {
    background: #1b1d21;
  }

  .btn {
    flex: 1 1 0;
    min-width: 0;
    height: 100%;
  }

  .btn--fixed,
  .group .select + .btn,
  .group .btn:has(+ .select) {
    flex: none;
    width: 37px;
  }

  .gridType .btn:has(+ .select) {
    padding-left: 4px;
    width: 34px;
  }

  .gridType .select {
    padding-left: 4px;
  }

  .btn--on {
    background: #f4f4f4;
    color: #16181a;
  }

  .btn--dark {
    background: #1b1d21;
  }

  .btn--letter {
    font-family: 'Noto Sans', sans-serif;
    font-size: 20px;
    font-weight: 700;
  }

  .btn--dim {
    color: #c4c4c6;
  }

  .btn--off {
    color: #8b8c90;
  }

  .btn--q {
    font-size: 25px;
  }

  .btn--aq {
    font-size: 22px;
    color: #d8d8da;
  }

  .states {
    width: 225px;
    margin-left: 117px;
  }

  .tools {
    width: 507px;
  }

  .tools__grip {
    flex-direction: column;
    gap: 4px;
    width: 18px;
    height: 100%;
  }

  .tools__grip i {
    width: 8px;
    height: 4px;
    background: #f0f0f0;
  }

  .quantize {
    width: 337px;
  }

  .quantize .btn {
    flex: none;
    width: 37px;
  }

  .select {
    display: flex;
    flex: 1 1 0;
    min-width: 0;
    align-items: center;
    padding: 0 10px 0 9px;
    background: #1b1d21;
    font-size: 19px;
  }

  .select select {
    flex: 1 1 0;
    min-width: 0;
    height: 100%;
    appearance: none;
    outline: 0;
  }

  .drop {
    width: 100%;
    justify-content: space-between;
    padding: 0 11px 0 6px;
  }

  .infoline {
    height: 60px;
    padding-left: 11px;
    background: #181a1b;
    color: #a4a4a6;
    font-size: 16px;
    line-height: 60px;
    text-align: center;
  }

  /* panels */
  .workspace {
    display: grid;
    flex: 1;
    grid-template-columns: 258px minmax(0, 1fr) 344px;
    gap: 7px;
    padding: 6px 4px 6px 7px;
    background: #080808;
  }

  .side,
  .rack {
    display: flex;
    flex-direction: column;
  }

  .tabs {
    display: flex;
    height: 36px;
    margin-bottom: -3px;
  }

  .tab {
    flex: none;
    height: 31px;
    color: #d2d2d4;
    font-size: 18px;
    font-weight: 700;
  }

  .tab--latin {
    font-family: 'Noto Sans', sans-serif;
    font-size: 16px;
  }

  .tab--active {
    position: relative;
    height: 36px;
    padding-bottom: 7px;
    border: 3px solid #55575b;
    border-bottom: 0;
    border-radius: 10px 3px 0 0;
    background: #24282b;
    color: #fff;
  }

  .tab--menu {
    flex-direction: column;
    gap: 3px;
    width: 34px;
    padding-top: 3px;
  }

  .tab--menu i {
    width: 13px;
    height: 3px;
    background: #c0c0c2;
  }

  .tab--close {
    width: 30px;
  }

  .tabs--bottom {
    height: 33px;
    margin: -3px 0 0;
  }

  .tabs--bottom .tab {
    height: 33px;
    padding-top: 1px;
  }

  .tabs--bottom .tab--active {
    padding: 0;
    border: 3px solid #55575b;
    border-top: 0;
    border-radius: 0 0 5px 5px;
  }

  .side__body {
    flex: 1;
    padding: 12px 10px;
    border: 3px solid #55575b;
    border-radius: 0 10px 10px 0;
    background: #24282b;
  }

  .selector {
    display: flex;
    height: 35px;
    overflow: hidden;
    border: 1px solid #9a9b9d;
    border-radius: 5px;
  }

  .selector__end {
    width: 35px;
    background: #6b6c70;
  }

  .selector__name {
    flex: 1;
    justify-content: space-between;
    padding: 0 4px 2px 8px;
    background: #8f9092;
    color: #16181a;
    font-size: 16px;
  }

  .channel {
    position: relative;
    display: flex;
    gap: 4px;
    height: 76px;
    margin: 11px 4px 0;
    padding: 3px;
    color: #050505;
  }

  .channel__shape {
    position: absolute;
    left: 0;
    top: 0;
    width: 224px;
    height: 76px;
    fill: #afc4dd;
  }

  .channel__left {
    position: relative;
    width: 68px;
  }

  .channel__right {
    position: relative;
    width: 145px;
  }

  .pad {
    display: flex;
    height: 26px;
    overflow: hidden;
    border: 1px solid #55657a;
    border-radius: 5px;
    background: linear-gradient(#c9d8e8, #a9bace);
  }

  .pad + .pad {
    margin-top: 1px;
  }

  .pad button {
    flex: 1;
  }

  .channel__left .pad button + button {
    border-left: 1px solid #55657a;
  }

  .pad__amber {
    background: #e0b377;
  }

  .ms {
    font: 900 17px/20px 'Inter', sans-serif;
  }

  .channel__round {
    display: flex;
    gap: 3px;
    margin-top: 3px;
  }

  .round {
    width: 28px;
    height: 28px;
    border: 1px solid #45566a;
    border-radius: 50%;
    background: linear-gradient(#d2deea, #8fa0b4);
  }

  .round--big {
    width: 37px;
    height: 37px;
  }

  .levels {
    display: flex;
    margin: 1px 4px 0;
  }

  .levels__icons {
    display: flex;
    flex-direction: column;
    align-items: center;
    justify-content: space-around;
    width: 72px;
    padding-left: 22px;
    color: #86a3c0;
  }

  .levels__values {
    width: 152px;
    padding-top: 4px;
    border-radius: 4px;
    background: #000;
    font: 16px/25px 'Liberation Sans', sans-serif;
  }

  .levels__values label {
    display: block;
    height: 32px;
    text-align: right;
  }

  .levels__values .levels__pan {
    text-align: center;
    color: #6f8cb0;
  }

  .levels__values span {
    display: block;
  }

  .levels__values input {
    display: block;
    width: 100%;
    height: 8px;
    appearance: none;
    background: linear-gradient(to right, #6f9fcb var(--fill), #17232f 0) center / 100% 4px no-repeat;
  }

  .levels__values input::-webkit-slider-thumb {
    appearance: none;
    width: 9px;
    height: 9px;
    background: linear-gradient(#7fe0ff, #7fe0ff) center / 8px 4px no-repeat #fff;
  }

  .routing {
    height: 81px;
    margin: 15px 4px 0;
    overflow: hidden;
    border-radius: 4px;
    background: #000;
    font: 15px 'Liberation Sans', 'Noto Sans CJK SC', sans-serif;
  }

  .routing__row {
    width: 100%;
    height: 27px;
    gap: 7px;
    padding: 0 4px 3px;
    border-bottom: 1px solid #2c343c;
  }

  .routing__row span {
    flex: 1;
    text-align: left;
  }

  .routing__row .icon {
    color: #4e6670;
  }

  .routing__row--empty {
    color: #5c708a;
  }

  .routing__row--empty .icon {
    color: #8097b0;
  }

  .sections {
    display: grid;
    align-content: space-between;
    height: 332px;
    margin-top: 31px;
  }

  .section {
    display: flex;
    height: 35px;
    overflow: hidden;
    border: 1px solid #7b7d80;
    border-radius: 5px;
    background: #5b5c60;
    font-size: 18px;
  }

  .section__name {
    flex: 1;
    justify-content: flex-start;
    gap: 8px;
    padding: 0 0 2px 9px;
  }

  .section__name--latin {
    padding-bottom: 0;
    font-size: 16px;
  }

  .section__name svg {
    fill: #fff;
  }

  .section__icon {
    width: 35px;
    border-left: 1px solid #7b7d80;
  }

  .section__icon--active {
    background: linear-gradient(#9cc6f7, #7cabf0);
  }

  .setup {
    width: 38px;
    height: 29px;
    margin-top: 13px;
    border: 1px solid #6b6d70;
    border-radius: 4px;
    background: #1b1d21;
  }

  /* project window */
  .center {
    display: grid;
    grid-template-rows: minmax(0, 671fr) minmax(0, 650fr);
    gap: 6px;
  }

  .project {
    display: flex;
    border: 3px solid #f4f4f4;
    border-radius: 10px;
    padding: 6px 6px 0;
    background: #24282b;
  }

  .trackList {
    display: flex;
    flex: none;
    flex-direction: column;
    width: 420px;
  }

  .trackList__head {
    display: flex;
    height: 36px;
  }

  .mini {
    display: flex;
    flex: none;
    height: 29px;
    border: 1px solid #7b7d80;
    border-radius: 4px;
    background: #5b5c60;
  }

  .mini--dark {
    border-color: #55575b;
    background: #1b1d21;
  }

  .mini--soft {
    border-color: #5c5e61;
    background: #36393c;
  }

  .signature {
    width: 95px;
    height: 29px;
    margin-left: 119px;
    padding-left: 6px;
    border-radius: 4px 0 0 4px;
    background: #43464a;
    font-size: 15px;
    line-height: 29px;
  }

  .trackList__find {
    margin-left: 15px;
  }

  .trackList__rows {
    padding-left: 2px;
    border-top: 2px solid #77797c;
    padding-top: 1px;
  }

  .track {
    display: flex;
    height: 63px;
    border-bottom: 1px solid #8f9194;
    color: #0c0d0e;
  }

  .track__tab {
    display: flex;
    justify-content: space-between;
    width: 61px;
    padding: 2px 6px 0 2px;
    background: #8f9194;
    color: #3a3c40;
    font-size: 15px;
    line-height: 28px;
  }

  .track__tab .icon {
    color: #fff;
  }

  .track__main {
    display: flex;
    flex: 1;
    flex-direction: column;
    gap: 6px;
    padding: 3px 9px;
  }

  .track--selected .track__main {
    background: #e8e8e8;
  }

  .track__row {
    display: flex;
    gap: 4px;
    height: 25px;
  }

  .cell {
    display: flex;
    height: 25px;
    border: 1px solid #15171a;
    border-radius: 5px;
    background: #4c4f52;
  }

  .cell button {
    flex: 1;
  }

  .cell button.ms + button.ms {
    border-left: 1px solid #26282b;
  }

  .track__row + .track__row .cell button.ms + button.ms {
    border-left: 0;
  }

  .cell--faint {
    color: #26292c;
  }

  .track__color {
    width: 25px;
    margin-right: 43px;
    border-color: #1c1f22;
    background: #24282b;
  }

  .track--selected .cell {
    border-color: #55575b;
    background: #f1f1f3;
    color: #050505;
  }

  .track--selected .track__color {
    border-color: #aaa;
    background: #e8e8e8;
  }

  .track__name {
    padding-left: 3px;
    color: #fff;
    font-size: 19px;
    line-height: 25px;
  }

  .track--selected .track__name {
    color: #16181a;
  }

  .track__meter {
    display: flex;
    align-items: flex-end;
    gap: 1px;
    width: 17px;
    padding: 0 3px 2px;
    background: #000;
  }

  .track__meter i {
    width: 5px;
    background: #22d3f0;
  }

  .trackList__foot {
    display: flex;
    align-items: center;
    height: 20px;
    margin-top: auto;
    padding: 0 2px 0 12px;
    margin-bottom: 10px;
    color: #8b8c90;
  }

  .trackList__foot span {
    flex: 1;
  }

  .trackList__foot button {
    width: 31px;
  }

  .divider {
    flex: none;
    width: 3px;
    margin: 0 3px 7px 1px;
    background: #77797c;
  }

  .divider i {
    display: block;
    height: 39px;
    margin-top: 306px;
    background: repeating-linear-gradient(#24282b 0 3px, #e0e0e0 3px 9px);
  }

  .arrange {
    position: relative;
    display: flex;
    flex: 1;
    flex-direction: column;
    min-width: 0;
  }

  .ruler {
    position: relative;
    display: flex;
    height: 36px;
    margin-right: 6px;
    overflow: hidden;
    background: #898a8e;
    color: #0a0a0a;
    font: 700 17px 'Noto Sans', sans-serif;
  }

  .ruler__bar {
    flex: none;
    height: 34px;
    padding: 13px 0 0 6px;
    border-left: 2px solid #111;
    line-height: 20px;
  }

  .ruler--beats .ruler__bar {
    background: linear-gradient(to right, transparent calc(100% - 1px), #33353a 0) 0 0 / 25% 13px repeat-x;
  }

  .arrange__canvas,
  .sample__canvas {
    position: relative;
    flex: 1;
    min-height: 0;
  }

  .arrange__canvas {
    margin: 3px 0 2px;
  }

  .arrange__canvas svg,
  .sample__canvas svg {
    position: absolute;
    width: 100%;
    height: 100%;
  }

  .loud {
    fill: #58595b;
    stroke: #0d0f0d;
  }

  .cursor {
    position: absolute;
    width: 6px;
    border: solid #f0f0f0;
    border-width: 0 1px;
    background: linear-gradient(to right, transparent 1px, #101214 1px 3px, transparent 3px);
  }

  .cursor--project {
    left: 42%;
    top: -2px;
    bottom: 27px;
  }

  .scrollRow {
    display: flex;
    align-items: center;
    flex: none;
    height: 17px;
    margin-bottom: 7px;
    padding-right: 19px;
    color: #a8a8aa;
    font-size: 14px;
  }

  .scroll {
    display: flex;
    flex: 1;
    align-items: center;
    height: 17px;
    padding: 0 8px;
    border-radius: 3px;
    background: #45484b;
  }

  .scroll__thumb {
    height: 13px;
    border-radius: 4px;
    background: #f4f4f4;
  }

  .scroll__thumb--project {
    width: 42px;
    margin: 0 auto 0 47px;
  }

  .scroll__thumb--sample {
    width: 137px;
    margin: 0 auto 0 12px;
  }

  .chev {
    width: 7px;
    height: 7px;
    border: solid #f0f0f0;
    border-width: 2px 0 0 2px;
  }

  .chev--left { transform: rotate(-45deg); }
  .chev--right { transform: rotate(135deg); }
  .chev--up { transform: rotate(45deg); }
  .chev--down { transform: rotate(225deg); }

  .scrollRow__menu {
    width: 32px;
  }

  .scrollRow span {
    width: 16px;
    text-align: center;
  }

  .zoom {
    width: 70px;
    height: 12px;
    margin: 0 6px 0 4px;
    appearance: none;
    background: linear-gradient(#a8a8aa, #a8a8aa) center / 100% 2px no-repeat;
  }

  .zoom::-webkit-slider-thumb {
    appearance: none;
    width: 9px;
    height: 9px;
    border-radius: 50%;
    background: #c0c0c2;
  }

  .zoom--vertical {
    width: 12px;
    margin: 0;
    writing-mode: vertical-lr;
    background: linear-gradient(#a8a8aa, #a8a8aa) center / 2px 100% no-repeat;
  }

  .zoomColumn {
    display: flex;
    flex: none;
    flex-direction: column;
    align-items: center;
    width: 17px;
    padding-bottom: 26px;
    color: #a8a8aa;
    font-size: 14px;
    line-height: 14px;
    margin-right: 1px;
  }

  .zoomColumn .icon {
    margin-top: 10px;
  }

  .zoomColumn__menu {
    width: 17px;
    height: 33px;
    border: 1px solid #8b8c90;
    border-radius: 4px;
    background: #5b5c60;
    color: #fff;
  }

  .zoomColumn__wave {
    height: 74px;
    margin-top: 10px;
  }

  .zoomColumn__height {
    flex: none;
    height: 84px;
  }

  .zoomColumn__preset {
    height: 32px;
  }

  .vscroll {
    display: flex;
    flex: 1;
    flex-direction: column;
    align-items: center;
    width: 17px;
    padding: 10px 0 6px;
    margin-top: 8px;
    border-radius: 3px;
    background: #45484b;
  }

  .vscroll i {
    flex: 1;
    width: 13px;
    margin: 10px 0 12px;
    border-radius: 4px;
    background: #f4f4f4;
  }

  .vscroll--idle {
    justify-content: space-between;
    margin: 0;
  }

  .vscroll--idle .chev {
    border-color: #707275;
  }

  /* sample editor */
  .editor {
    display: flex;
    flex-direction: column;
  }

  .editor__body {
    display: flex;
    flex: 1;
    flex-direction: column;
    border: 3px solid #55575b;
    border-radius: 10px;
    padding: 10px 12px 10px 10px;
    background: #24282b;
  }

  .editorTools {
    display: flex;
    gap: 8px;
    height: 48px;
  }

  .editorTools__play {
    margin-left: 124px;
  }

  .editorTools__more {
    margin: 4px 2px 0 -6px;
    fill: #f4f4f4;
  }

  .solo {
    width: 24px;
    height: 24px;
    border: 2px solid #e8e8e8;
    border-radius: 50%;
    font: 700 16px/20px 'Noto Sans', sans-serif;
  }

  .sample {
    position: relative;
    display: grid;
    flex: 1;
    grid-template-columns: 60px minmax(0, 1fr) 17px;
    grid-template-rows: 37px minmax(0, 1fr) 18px;
  }

  .sample__unit {
    justify-content: flex-end;
    gap: 17px;
    background: #1c2733;
    color: #b8c4d0;
    font-size: 15px;
  }

  .sample__ruler {
    margin-right: 4px;
  }

  .sample__ruler .ruler__bar {
    padding-left: 5px;
  }

  .sample__flag {
    position: absolute;
    left: 0;
    top: 0;
    fill: #fff;
  }

  .sample__scale {
    display: grid;
    background: #1a1c20;
    color: #b4b4b6;
    font-size: 15px;
    line-height: 22px;
    text-align: right;
  }

  .sample__half {
    display: flex;
    flex-direction: column;
    justify-content: space-between;
    padding: 2px 8px 2px 0;
    border-bottom: 2px solid #b4b4b6;
  }

  .sample__canvas {
    margin-right: 1px;
  }

  .flag {
    position: absolute;
    left: 0;
    top: 2px;
    height: 23px;
    padding: 0 3px;
    background: #3c5c7e;
    color: #fff;
    font-size: 18px;
    line-height: 23px;
  }

  .flag--snap {
    top: 234px;
    padding: 0 6px;
  }

  .sample__side {
    display: flex;
    flex-direction: column;
    align-items: center;
    color: #a8a8aa;
    font-size: 14px;
    line-height: 14px;
  }

  .sample__side .zoom {
    height: 92px;
  }

  .sample__scroll {
    grid-column: 2 / 4;
    height: 18px;
    margin: 0;
    padding-right: 20px;
  }

  .sample__scroll .scroll {
    height: 18px;
    margin-right: 4px;
  }

  .cursor--sample {
    left: 51.3%;
    top: -1px;
    bottom: 20px;
  }

  /* rack */
  .rack__body {
    flex: 1;
    padding: 13px 11px;
    border: 3px solid #55575b;
    border-radius: 0 10px 10px 10px;
    background: #24282b;
  }

  .rack__tools {
    display: flex;
    gap: 4px;
    padding: 0 4px 0 15px;
  }

  .rack__tools .w38 + .w38 {
    margin-left: 13px;
  }

  .rack__tools .push + .w38 {
    margin-left: 0;
  }

  .rack__heads {
    display: flex;
    justify-content: space-between;
    margin-top: 16px;
    padding: 0 48px 3px 52px;
    border-bottom: 3px solid #dfe8f5;
    color: #dfe8f5;
    font: 700 16px/26px 'Noto Sans', sans-serif;
  }

  .rack__heads button {
    gap: 7px;
  }

  .rack__heads button + button {
    gap: 11px;
  }

  .rack__heads svg {
    fill: #dfe8f5;
  }

  /* transport */
  .transport {
    position: relative;
    display: flex;
    align-items: flex-start;
    height: 63px;
    padding: 11px 4px 0 6px;
    background: #24282b;
  }

  .transport .drop {
    padding: 0 11px 0 5px;
  }

  .transport__gapLeft {
    flex: 12;
  }

  .transport__gapRight {
    flex: 11;
  }

  .dots {
    display: flex;
    flex: none;
    flex-direction: column;
    gap: 2px;
    width: 17px;
    padding: 10px 0 0 3px;
  }

  .dots i {
    width: 4px;
    height: 3px;
    background: #c4c4c6;
  }

  .time {
    display: flex;
    flex: none;
    align-items: center;
    justify-content: flex-end;
    width: 186px;
    padding-right: 9px;
    background: #1b1d21;
    color: #fff;
    font-size: 19px;
  }

  .time b {
    min-width: 31px;
    font-weight: 400;
    text-align: right;
  }

  .time b:last-child {
    min-width: 40px;
  }

  .deck {
    display: flex;
    flex: none;
    width: 299px;
    height: 48px;
    margin-top: -5px;
    overflow: hidden;
    border: 3px solid #c8c9cb;
    border-radius: 5px;
    background: #727476;
  }

  .btn--stop {
    background: #e4eaf4;
    color: #0c0d0e;
  }

  .btn--split {
    border-right: 1px solid #55575b;
  }

  .w160 .btn {
    flex: none;
    width: 37px;
  }

  .tempo {
    width: 84px;
    padding-left: 17px;
    font-size: 18px;
  }

  .spin {
    align-self: center;
    margin-left: 14px;
    fill: #fff;
  }

  .output {
    width: 133px;
  }

  .output span {
    width: 39px;
    border-right: 1px solid #55575b;
  }

  .output div {
    display: flex;
    flex: 1;
    align-items: flex-end;
    gap: 8px;
    padding: 0 20px 2px;
  }

  .output i {
    width: 26px;
    height: 5px;
    background: #22d3f0;
  }

  .output i:last-child {
    height: 8px;
  }

  .watermark {
    position: absolute;
    right: 19px;
    bottom: 7px;
    color: #b8b8ba;
    font-size: 19px;
    line-height: 26px;
    text-shadow: 1px 1px 1px #000;
  }
</style>
